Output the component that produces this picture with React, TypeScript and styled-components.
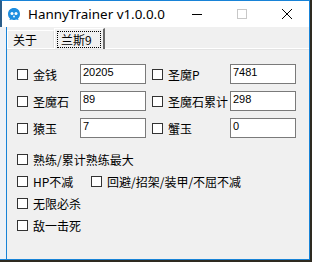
import { Fragment } from 'react';
import styled, { createGlobalStyle } from 'styled-components';

const GlobalStyle = createGlobalStyle`
  html, body {
    margin: 0;
    padding: 0;
    background: #2e2a20;
  }
  #root {
    width: 312px;
    height: 262px;
    overflow: hidden;
  }
`;

const Window = styled.div`
  width: 309px;
  height: 259px;
  display: flex;
  flex-direction: column;
  background: #eef2f7;
  border-right: 1px solid #1883d7;
  border-bottom: 1px solid #1883d7;
`;

const TitleBar = styled.div`
  height: 27px;
  flex-shrink: 0;
  display: flex;
  align-items: center;
  background: #ffffff;
  border-top: 1px solid #1883d7;
  border-left: 2px solid #2a5d8a;
  box-sizing: border-box;
`;

const Title = styled.span`
  margin-left: 7px;
  font-family: "Noto Sans", "Open Sans", sans-serif;
  font-size: 13.4px;
  color: #000;
  flex: 1;
  padding-bottom: 1px;
`;

const CtrlButton = styled.div`
  width: 45px;
  height: 26px;
  display: flex;
  align-items: center;
  justify-content: center;
`;

const Client = styled.div`
  flex: 1;
  margin-left: 6px;
  border-left: 1px solid #1883d7;
  background: #f0f0f0;
  display: flex;
  flex-direction: column;
`;

const TabStrip = styled.div`
  height: 21px;
  display: flex;
  align-items: flex-end;
  border-bottom: 1px solid #ffffff;
  box-shadow: 0 1px 0 #e3e3e3;
`;

const Tab = styled.div<{ $active?: boolean }>`
  font-family: "Noto Sans CJK SC", "Noto Sans", sans-serif;
  font-size: 12px;
  color: #000;
  box-sizing: border-box;
  height: ${p => (p.$active ? '21px' : '18px')};
  width: ${p => (p.$active ? '51px' : '48px')};
  margin-left: ${p => (p.$active ? '-1px' : '0')};
  background: #f0f0f0;
  border-top: 1px solid #ffffff;
  border-left: 1px solid #ffffff;
  border-right: 2px solid ${p => (p.$active ? '#696969' : '#e0e0e0')};
  padding: ${p => (p.$active ? '2px 2px 1px 2px' : '0 0 0 5px')};
  display: flex;
  align-items: center;
  position: relative;
  z-index: ${p => (p.$active ? 1 : 0)};
  margin-bottom: ${p => (p.$active ? '-1px' : '0')};
`;

const Focus = styled.span`
  flex: 1;
  height: 100%;
  box-sizing: border-box;
  border: 1px dotted #000;
  display: flex;
  align-items: center;
  padding-left: 3px;
`;

const Panel = styled.div`
  padding: 15px 0 0 10px;
  display: flex;
  flex-direction: column;
`;

const FieldGrid = styled.div`
  display: grid;
  grid-template-columns: 63px 66px 84px 66px;
  row-gap: 7px;
  & > :nth-child(4n + 3) {
    margin-left: 6px;
  }
`;

const Check = styled.label<{ $width?: number }>`
  display: flex;
  align-items: center;
  gap: 5px;
  font-family: "Noto Sans CJK SC", "Noto Sans", sans-serif;
  font-size: 12px;
  color: #000;
  white-space: nowrap;
  height: 20px;
  width: ${p => (p.$width ? `${p.$width}px` : 'auto')};
`;

const Box = styled.span`
  width: 11px;
  height: 11px;
  box-sizing: border-box;
  border: 1px solid #333;
  background: #fff;
  flex-shrink: 0;
`;

const Input = styled.div`
  height: 20px;
  box-sizing: border-box;
  border: 1px solid #7a7a7a;
  background: #fff;
  font-family: "Liberation Sans", Arial, sans-serif;
  font-size: 11px;
  color: #000;
  padding: 1px 2px;
  line-height: 13px;
`;

const Options = styled.div`
  margin-top: 11px;
  display: flex;
  flex-direction: column;
  gap: 2px;
`;

const OptionRow = styled.div`
  display: flex;
`;

const Logo = () => (
  <svg width="14" height="14" viewBox="0 0 14 14" style={{ marginLeft: 5 }}>
    <path
      d="M7 1 C10.6 1 13 3.6 13 7 C13 9 12.2 10.6 11 11.6 L11.6 13 L9 12.4 C8.4 12.8 7.6 13 7 13 C6.4 13 5.6 12.8 5 12.4 L2.4 13 L3 11.6 C1.8 10.6 1 9 1 7 C1 3.6 3.4 1 7 1 Z"
      fill="#1e8ee0"
    />
    <circle cx="5" cy="6.5" r="1.5" fill="#fff" />
    <circle cx="9" cy="6.5" r="1.5" fill="#fff" />
    <circle cx="7" cy="9.5" r="0.9" fill="#fff" />
  </svg>
);

const fields: [string, string][] = [
  ['金钱', '20205'],
  ['圣魔P', '7481'],
  ['圣魔石', '89'],
  ['圣魔石累计', '298'],
  ['猿玉', '7'],
  ['蟹玉', '0'],
];

const App = () => {
  return (
    <>
      <GlobalStyle />
      <Window>
        <TitleBar>
          <Logo />
          <Title>HannyTrainer v1.0.0.0</Title>
          <CtrlButton>
            <svg width="12" height="12" viewBox="0 0 12 12">
              <line x1="1" y1="6.5" x2="11" y2="6.5" stroke="#000" strokeWidth="1" />
            </svg>
          </CtrlButton>
          <CtrlButton>
            <svg width="12" height="12" viewBox="0 0 12 12">
              <rect x="1.5" y="1.5" width="9" height="9" fill="none" stroke="#c8c8c8" strokeWidth="1" />
            </svg>
          </CtrlButton>
          <CtrlButton>
            <svg width="12" height="12" viewBox="0 0 12 12">
              <path d="M1 1 L11 11 M11 1 L1 11" stroke="#000" strokeWidth="1" />
            </svg>
          </CtrlButton>
        </TitleBar>
        <Client>
          <TabStrip>
            <Tab>关于</Tab>
            <Tab $active>
              <Focus>兰斯9</Focus>
            </Tab>
          </TabStrip>
          <Panel>
            <FieldGrid>
              {fields.map(([label, value]) => (
                <Fragment key={label}>
                  <Check>
                    <Box />
                    {label}
                  </Check>
                  <Input>{value}</Input>
                </Fragment>
              ))}
            </FieldGrid>
            <Options>
              <Check>
                <Box />
                熟练/累计熟练最大
              </Check>
              <OptionRow>
                <Check $width={74}>
                  <Box />
                  HP不减
                </Check>
                <Check>
                  <Box />
                  回避/招架/装甲/不屈不减
                </Check>
              </OptionRow>
              <Check>
                <Box />
                无限必杀
              </Check>
              <Check>
                <Box />
                敌一击死
              </Check>
            </Options>
          </Panel>
        </Client>
      </Window>
    </>
  );
};

export default App;
